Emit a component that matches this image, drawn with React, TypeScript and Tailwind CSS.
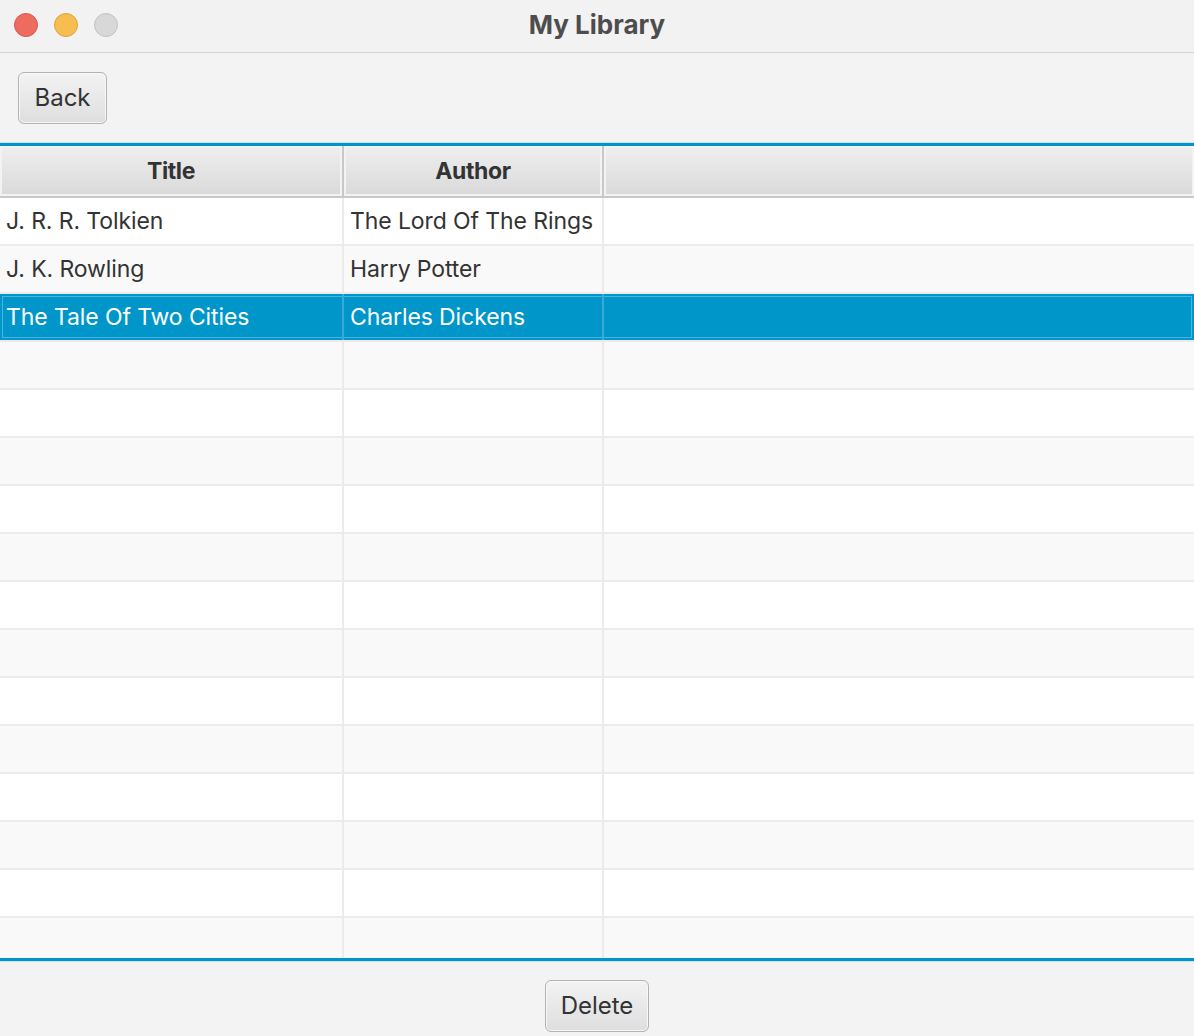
import React from 'react';

type Book = { title: string; author: string };

const books: Book[] = [
  { title: 'J. R. R. Tolkien', author: 'The Lord Of The Rings' },
  { title: 'J. K. Rowling', author: 'Harry Potter' },
  { title: 'The Tale Of Two Cities', author: 'Charles Dickens' },
];

const selectedIndex = 2;
const rowCount = 15;

function FxButton({ label, className }: { label: string; className: string }) {
  return (
    <button
      className={`flex items-center justify-center rounded-[6px] border border-[#b3b3b3] bg-gradient-to-b from-[#f3f3f3] to-[#dedede] text-[24px] text-[#333333] shadow-[inset_0_0_0_1px_#f7f7f7] ${className}`}
    >
      {label}
    </button>
  );
}

function Row({ book, index }: { book?: Book; index: number }) {
  const selected = index === selectedIndex;
  const bg = selected ? 'bg-[#0096c9]' : index % 2 === 0 ? 'bg-white' : 'bg-[#f9f9f9]';
  const line = selected ? 'border-[#3aa9d6]' : 'border-[#ebebeb]';
  const text = selected ? 'text-white' : 'text-[#333333]';
  return (
    <div
      className={`flex h-[48px] shrink-0 border-b-2 border-b-[#ebebeb] ${bg} ${
        selected ? 'shadow-[inset_0_0_0_2px_#0096c9,inset_0_0_0_3px_#4cb3dc]' : ''
      }`}
    >
      <div
        className={`flex w-[344px] items-center whitespace-nowrap border-r-2 pl-[6px] text-[23px] tracking-[-0.1px] ${line} ${text}`}
      >
        {book?.title}
      </div>
      <div
        className={`flex w-[260px] items-center whitespace-nowrap border-r-2 pl-[6px] text-[23px] tracking-[-0.1px] ${line} ${text}`}
      >
        {book?.author}
      </div>
      <div className="flex-1" />
    </div>
  );
}

export default function App() {
  return (
    <div
      className="flex h-[1036px] w-[1194px] flex-col overflow-hidden bg-[#f3f3f3]"
      style={{ fontFamily: 'Inter, "Noto Sans", sans-serif' }}
    >
      {/* title bar */}
      <div className="grid h-[53px] shrink-0 grid-cols-[1fr_auto_1fr] items-center border-b border-[#d2d2d2] bg-[#f2f2f2] pb-[4px]">
        <div className="flex items-center gap-[16px] pl-[14px] pt-[2px]">
          <span className="h-[24px] w-[24px] rounded-full border border-[#d65a4f] bg-[#ee6b60]" />
          <span className="h-[24px] w-[24px] rounded-full border border-[#dca43c] bg-[#f6be50]" />
          <span className="h-[24px] w-[24px] rounded-full border border-[#c2c2c2] bg-[#d8d8d8]" />
        </div>
        <div className="text-[26px] font-bold text-[#4d4d4d]">My Library</div>
        <div />
      </div>

      {/* toolbar */}
      <div className="h-[90px] shrink-0 pl-[18px] pt-[19px]">
        <FxButton label="Back" className="h-[52px] w-[89px]" />
      </div>

      {/* table */}
      <div className="flex h-[818px] shrink-0 flex-col overflow-hidden border-y-[3px] border-[#0096c9] bg-[#f9f9f9] shadow-[0_-1px_0_#c6e4f1,0_1px_0_#c6e4f1]">
        <div className="flex h-[52px] shrink-0 border-b-2 border-[#c8c8c8] bg-gradient-to-b from-[#efefef] to-[#d9d9d9]">
          <div className="flex w-[344px] items-center justify-center border-r-2 border-[#c8c8c8] text-[23px] font-bold tracking-[-0.4px] text-[#333333] shadow-[inset_0_0_0_2px_#f3f3f3]">
            Title
          </div>
          <div className="flex w-[260px] items-center justify-center border-r-2 border-[#c8c8c8] text-[23px] font-bold tracking-[-0.4px] text-[#333333] shadow-[inset_0_0_0_2px_#f3f3f3]">
            Author
          </div>
          <div className="flex-1 shadow-[inset_0_0_0_2px_#f3f3f3]" />
        </div>
        {Array.from({ length: rowCount + 1 }).map((_, i) => (
          <Row key={i} book={books[i]} index={i} />
        ))}
      </div>

      {/* footer */}
      <div className="flex flex-1 justify-center pt-[19px]">
        <FxButton label="Delete" className="h-[52px] w-[104px]" />
      </div>
    </div>
  );
}
